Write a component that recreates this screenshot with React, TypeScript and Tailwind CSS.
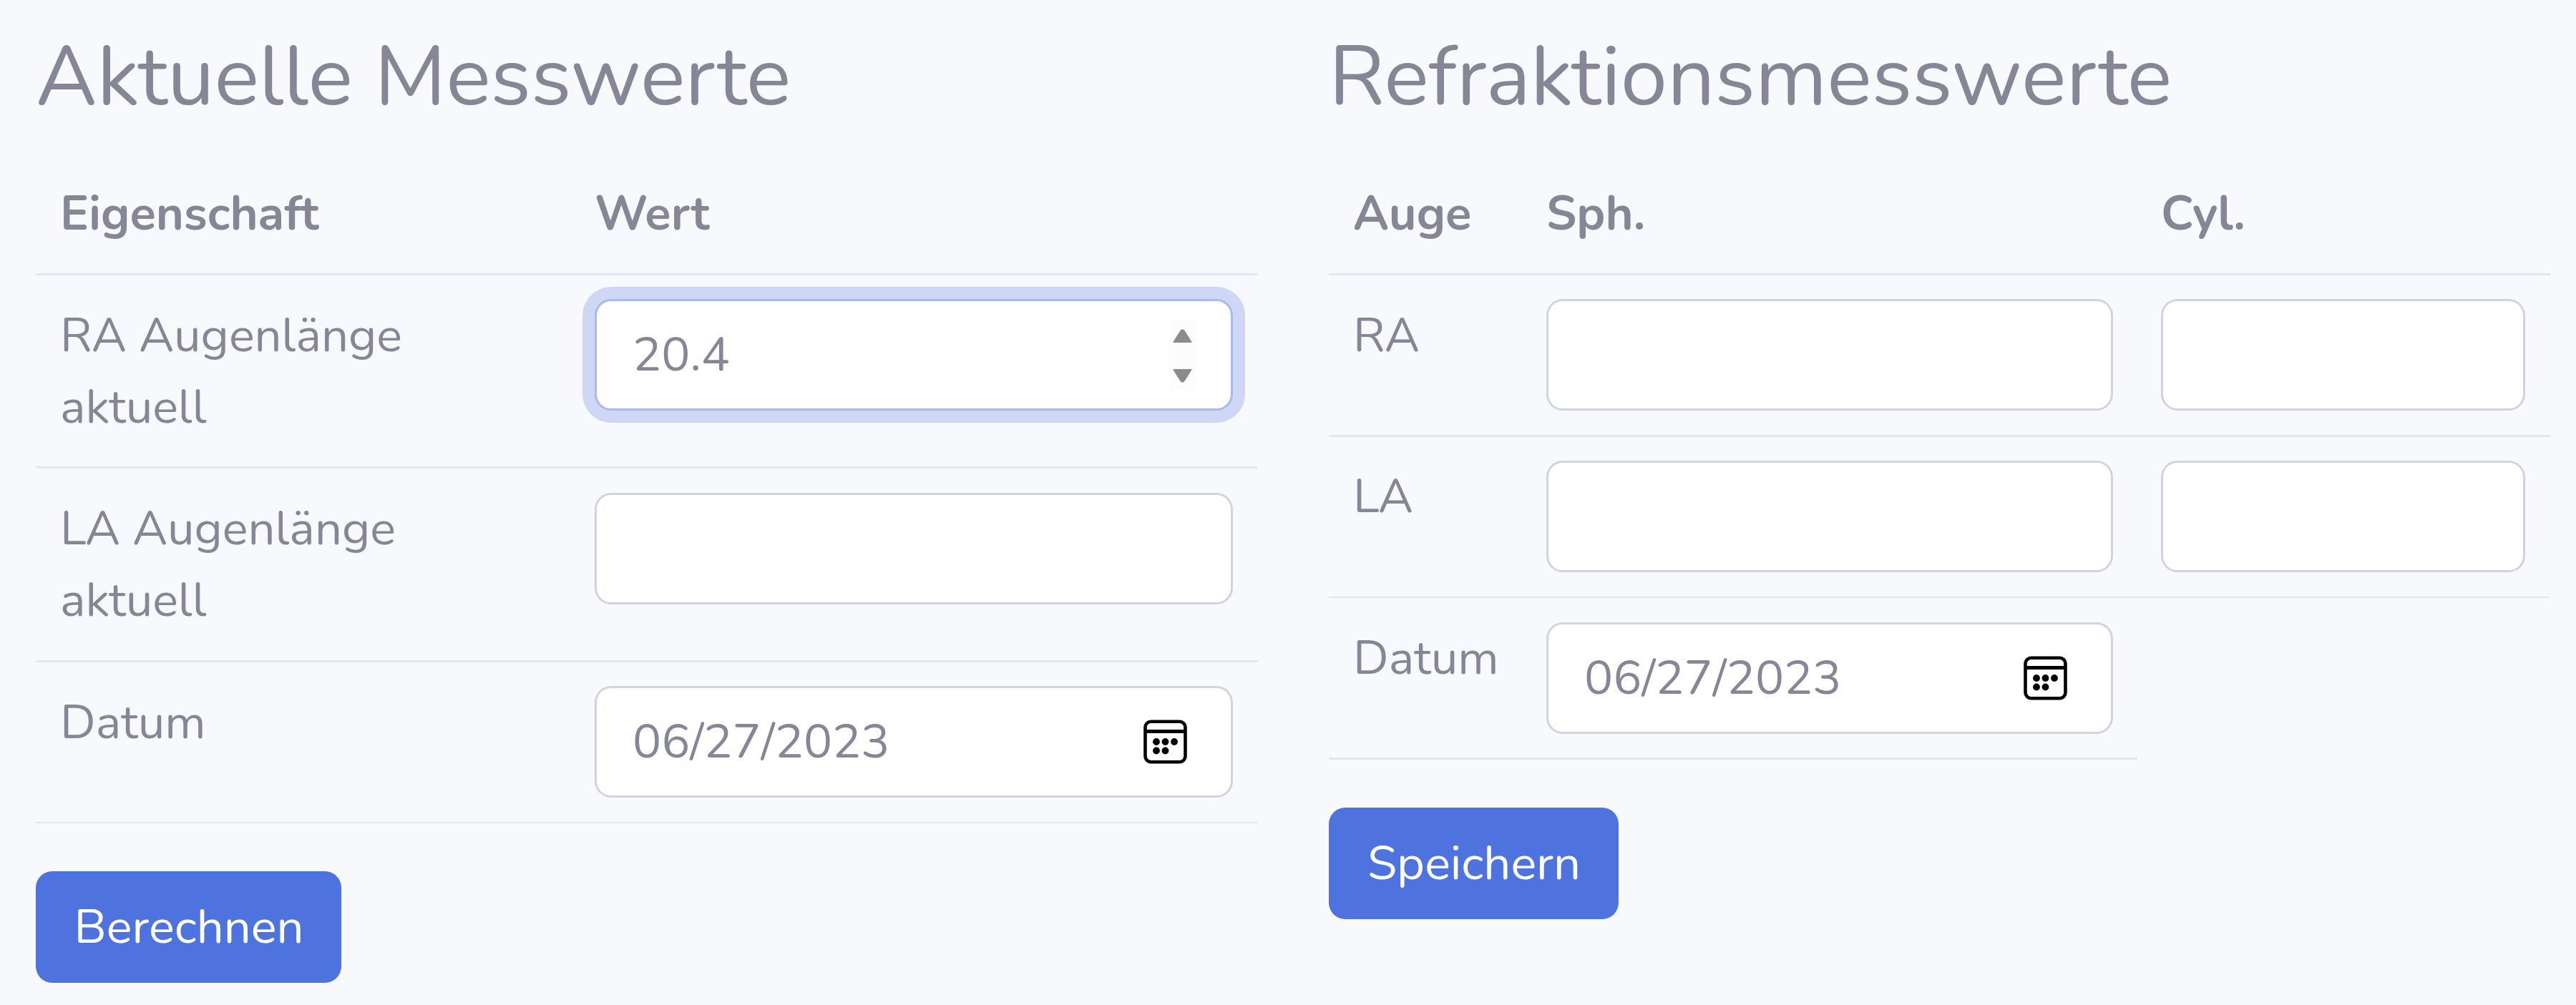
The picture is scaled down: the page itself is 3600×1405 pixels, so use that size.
import React from 'react';

const field =
  'block h-[156px] w-full rounded-[23px] border-[3px] bg-white pl-[50px] text-[67px] leading-[100.8px] outline-none';
const idle = 'border-[#d1d3e2]';
const focused = 'border-[#a7b9f0] shadow-[0_0_0_17px_#ced8f5]';
const cell = 'px-[34px] pt-[33.6px]';

function Field({ label, value = '', active = false }: { label: string; value?: string; active?: boolean }) {
  return (
    <input
      aria-label={label}
      readOnly
      value={value}
      className={`${field} ${active ? focused : idle}`}
    />
  );
}

function Spinner() {
  return (
    <svg className="absolute left-[803px] top-[28px] h-[100px] w-[36px] bg-[#fcfcfc]" viewBox="0 0 36 100" fill="#8b8b8b">
      <path d="M5.5 33 Q5.5 31.5 7 29.5 L15.5 16 Q18.5 12.5 21.5 16 L30 29.5 Q31.5 31.5 31.5 33 Z" />
      <path d="M5.5 70 H31.5 Q31.5 71.5 30 73.5 L21.5 87 Q18.5 90.5 15.5 87 L7 73.5 Q5.5 71.5 5.5 70 Z" />
    </svg>
  );
}

function CalendarIcon({ className }: { className: string }) {
  return (
    <svg className={`absolute h-[62px] w-[61px] ${className}`} viewBox="0 0 61 62" fill="none" stroke="#000">
      <rect x="2.5" y="2.75" width="56" height="56.5" rx="8" strokeWidth="4.6" />
      <path d="M4 16.5H57" strokeWidth="5" />
      <g fill="#000" stroke="none">
        <circle cx="18" cy="31" r="4.9" />
        <circle cx="30.5" cy="31" r="4.9" />
        <circle cx="43" cy="31" r="4.9" />
        <circle cx="18" cy="43.5" r="4.9" />
        <circle cx="30.5" cy="43.5" r="4.9" />
      </g>
    </svg>
  );
}

function SubmitButton({ children, className }: { children: string; className: string }) {
  return (
    <button
      type="button"
      className={`mt-[67px] block h-[156px] rounded-[23px] bg-[#4e73df] pl-px text-center text-[67px] leading-[100.8px] text-white ${className}`}
    >
      {children}
    </button>
  );
}

const heading = 'h-[178px] whitespace-nowrap pt-[36.5px] text-[117.6px] leading-[141px] tracking-[-0.2px]';

export default function App() {
  return (
    <main className="flex h-[1405px] w-[3600px] gap-[100px] overflow-hidden bg-[#f8f9fc] pl-[50px] font-['Nunito','Lato',sans-serif] text-[67px] leading-[100.8px] text-[#858796]">
      <section className="w-[1707px]">
        <h2 className={heading}>Aktuelle Messwerte</h2>
        <div className="mt-[37px] grid h-[170px] grid-cols-[747px_960px] border-b-[3px] border-[#e3e6f0] font-bold">
          <div className={cell}>Eigenschaft</div>
          <div className={cell}>Wert</div>
        </div>
        <div className="grid h-[270px] grid-cols-[747px_960px] border-b-[3px] border-[#e3e6f0]">
          <div className={cell}>RA Augenlänge<br />aktuell</div>
          <div className="px-[34px] pt-[33px]">
            <div className="relative">
              <Field label="RA Augenlänge" value="20.4" active />
              <Spinner />
            </div>
          </div>
        </div>
        <div className="grid h-[271px] grid-cols-[747px_960px] border-b-[3px] border-[#e3e6f0]">
          <div className={cell}>LA Augenlänge<br />aktuell</div>
          <div className="px-[34px] pt-[34px]"><Field label="LA Augenlänge" /></div>
        </div>
        <div className="grid h-[225px] grid-cols-[747px_960px] border-b-2 border-[#e3e6f0]">
          <div className={cell}>Datum</div>
          <div className="px-[34px] pt-[33px]">
            <div className="relative">
              <Field label="Datum" value="06/27/2023" />
              <CalendarIcon className="left-[767px] top-[47px]" />
            </div>
          </div>
        </div>
        <SubmitButton className="w-[427px]">Berechnen</SubmitButton>
      </section>

      <section className="w-[1707px]">
        <h2 className={heading}>Refraktionsmesswerte</h2>
        <div className="mt-[37px] grid h-[170px] grid-cols-[270px_859px_578px] border-b-[3px] border-[#e3e6f0] font-bold">
          <div className={cell}>Auge</div>
          <div className={cell}>Sph.</div>
          <div className={cell}>Cyl.</div>
        </div>
        <div className="grid h-[226px] grid-cols-[270px_859px_578px] border-b-[3px] border-[#e3e6f0]">
          <div className={cell}>RA</div>
          <div className="pl-[34px] pr-[33px] pt-[33px]"><Field label="RA Sph." /></div>
          <div className="pl-[34px] pr-[35px] pt-[33px]"><Field label="RA Cyl." /></div>
        </div>
        <div className="grid h-[225px] grid-cols-[270px_859px_578px] border-b-2 border-[#e3e6f0]">
          <div className="px-[34px] pt-[32.6px]">LA</div>
          <div className="pl-[34px] pr-[33px] pt-[33px]"><Field label="LA Sph." /></div>
          <div className="pl-[34px] pr-[35px] pt-[33px]"><Field label="LA Cyl." /></div>
        </div>
        <div className="grid h-[226px] w-[1130px] grid-cols-[270px_860px] border-b-[3px] border-[#e3e6f0]">
          <div className={cell}>Datum</div>
          <div className="px-[34px] pt-[34px]">
            <div className="relative">
              <Field label="Datum" value="06/27/2023" />
              <CalendarIcon className="left-[667px] top-[47px]" />
            </div>
          </div>
        </div>
        <SubmitButton className="w-[405px]">Speichern</SubmitButton>
      </section>
    </main>
  );
}
